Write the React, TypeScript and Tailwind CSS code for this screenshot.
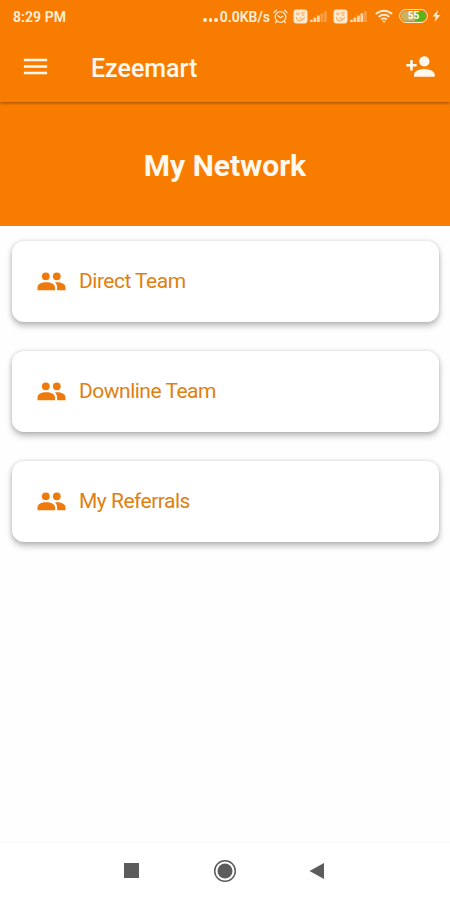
import React from "react";
import { MdMenu, MdPersonAdd } from "react-icons/md";

const teams = ["Direct Team", "Downline Team", "My Referrals"];

const PeopleIcon = () => (
  <svg width="29" height="19" viewBox="0 0 29 19" fill="#ee7a0c">
    <circle cx="8.800" cy="4.300" r="3.900" />
    <circle cx="19.800" cy="4.300" r="3.900" />
    <path d="M0.500 18.200v-2.700C0.500 12 4.500 10.200 9.200 10.200S18 12 18 15.500v2.700z" />
    <path d="M18 10.400c5.500-.6 10.500 1.400 10.500 5.100v2.700h-8.400v-2.700c0-2.100-.7-3.700-2.100-5.100z" />
  </svg>
);

const SimBadge = () => (
  <svg width="15" height="15" viewBox="0 0 14 14">
    <rect x="0.500" y="0.500" width="13" height="13" rx="3" fill="#ffe9cf" />
    <path
      d="M3 3.500l1.500 2L6 3.500M7.500 3.500h3.500M8 5.500h2.500M3 7.500c.5 2 2 3.500 4 3.800M6.500 7.500l1.800 3 2.700-3"
      fill="none"
      stroke="#f9a85a"
      strokeWidth="1"
    />
  </svg>
);

const Signal = ({ level }: { level: number }) => (
  <svg width="17" height="12" viewBox="0 0 17 12" fill="#ffe9cf">
    {[0, 1, 2, 3, 4].map((i) => (
      <rect
        key={i}
        x={i * 3.5}
        y={9.8 - i * 2.2}
        width="2.8"
        height={2.2 + i * 2.2}
        rx="0.6"
        opacity={i < level ? 0.85 : 0.3}
      />
    ))}
  </svg>
);

const AlarmIcon = () => (
  <svg
    width="15"
    height="15"
    viewBox="0 0 15 15"
    fill="none"
    stroke="#ffe9cf"
    strokeWidth="1.300"
    strokeLinecap="round"
  >
    <circle cx="7.500" cy="8" r="5.300" />
    <path d="M1 3.500L3.500 1.300M14 3.500l-2.500-2.200M5 6.800l2.500 2 2.300-1.500M3.500 12.500l-1 1.200M11.500 12.500l1 1.200" />
  </svg>
);

const WifiIcon = () => (
  <svg
    width="18"
    height="14"
    viewBox="0 0 18 14"
    fill="none"
    stroke="#ffe9cf"
    strokeWidth="2"
  >
    <path d="M1 5c4.500-4.300 11.500-4.300 16 0M3.700 7.900c3-2.900 7.600-2.900 10.600 0M6.200 10.600c1.600-1.500 4-1.500 5.600 0" />
    <path d="M9 14L7.300 11.800h3.400z" fill="#ffe9cf" stroke="none" />
  </svg>
);

const StatusBar = () => (
  <div className="flex h-8 items-center pl-[13px] pr-[9px] text-[#fff0dc]">
    <span className="pt-px text-[14px] font-semibold leading-none tracking-[0.1px]">
      8:29 PM
    </span>
    <div className="ml-auto flex items-center">
      <div className="mr-[2px] mt-2 flex gap-[2px]">
        <i className="size-[3.500px] rounded-full bg-[#fff0dc]" />
        <i className="size-[3.500px] rounded-full bg-[#fff0dc]" />
        <i className="size-[3.500px] rounded-full bg-[#fff0dc]" />
      </div>
      <span className="mr-[3px] pt-px text-[14px] font-semibold leading-none">
        0.0KB/s
      </span>
      <AlarmIcon />
      <div className="ml-[5px] flex items-center gap-[2px]">
        <SimBadge />
        <Signal level={3} />
      </div>
      <div className="ml-[6px] flex items-center gap-[2px]">
        <SimBadge />
        <Signal level={4} />
      </div>
      <div className="ml-[8px]">
        <WifiIcon />
      </div>
      {/* battery */}
      <div className="ml-[6px] flex h-[14px] w-[29px] rounded-full border-[1.5px] border-[#ffe9cf] p-px">
        <div className="flex flex-1 items-center justify-center rounded-full bg-linear-to-r from-[#c9b35c] from-55% to-[#56b51c] to-55% text-[10px] font-bold leading-none text-white">
          55
        </div>
      </div>
      <svg className="ml-1" width="9" height="12" viewBox="0 0 9 12">
        <path d="M6 0L0.500 6.500h3.200L2.500 12 8.500 5H5z" fill="#ffe9cf" />
      </svg>
    </div>
  </div>
);

const App = () => {
  return (
    <div className="flex h-[900px] w-full flex-col bg-[#fefefe] font-['Roboto',sans-serif]">
      {/* header */}
      <header className="z-10 h-[102px] bg-[#f87c00] text-[#fff8ee] shadow-[0_1px_3px_rgba(90,40,0,0.55)]">
        <StatusBar />
        <div className="flex h-[69px] items-center pl-5 pr-[14px]">
          <MdMenu size={31} />
          <h1 className="ml-10 pt-[4px] text-[25px] font-medium">Ezeemart</h1>
          <MdPersonAdd size={31} className="ml-auto" />
        </div>
      </header>
      {/* title */}
      <div className="flex h-[124px] items-center justify-center bg-[#f87c00]">
        <h2 className="pt-[2px] text-[30px] font-bold text-[#fff8ee]">
          My Network
        </h2>
      </div>
      {/* cards */}
      <main className="flex flex-1 flex-col gap-7 pl-3 pr-[11px] pt-[15px]">
        {teams.map((team) => (
          <button
            key={team}
            className="flex h-[81px] items-center rounded-xl bg-white pl-[25px] text-[#e08010] shadow-[0_4px_6px_rgba(0,0,0,0.25),0_0_4px_rgba(0,0,0,0.15)] not-last:mb-px"
          >
            <PeopleIcon />
            <span className="ml-[13px] text-[21px] tracking-[-0.5px]">
              {team}
            </span>
          </button>
        ))}
      </main>
      {/* navigation */}
      <nav className="flex h-[58px] items-center justify-between border-t border-[#f8f8f8] bg-white pb-[2px] pl-[124px] pr-[126px]">
        <div className="size-[15px] bg-[#5c5c5c]" />
        <svg width="24" height="24" viewBox="0 0 24 24" className="ml-[2px]">
          <circle cx="12" cy="12" r="10.300" fill="none" stroke="#5c5c5c" strokeWidth="1.500" />
          <circle cx="12" cy="12" r="7.500" fill="#5c5c5c" />
        </svg>
        <svg width="15" height="16" viewBox="0 0 15 16">
          <path d="M15 0v16L0.500 8z" fill="#5c5c5c" />
        </svg>
      </nav>
    </div>
  );
};

export default App;
